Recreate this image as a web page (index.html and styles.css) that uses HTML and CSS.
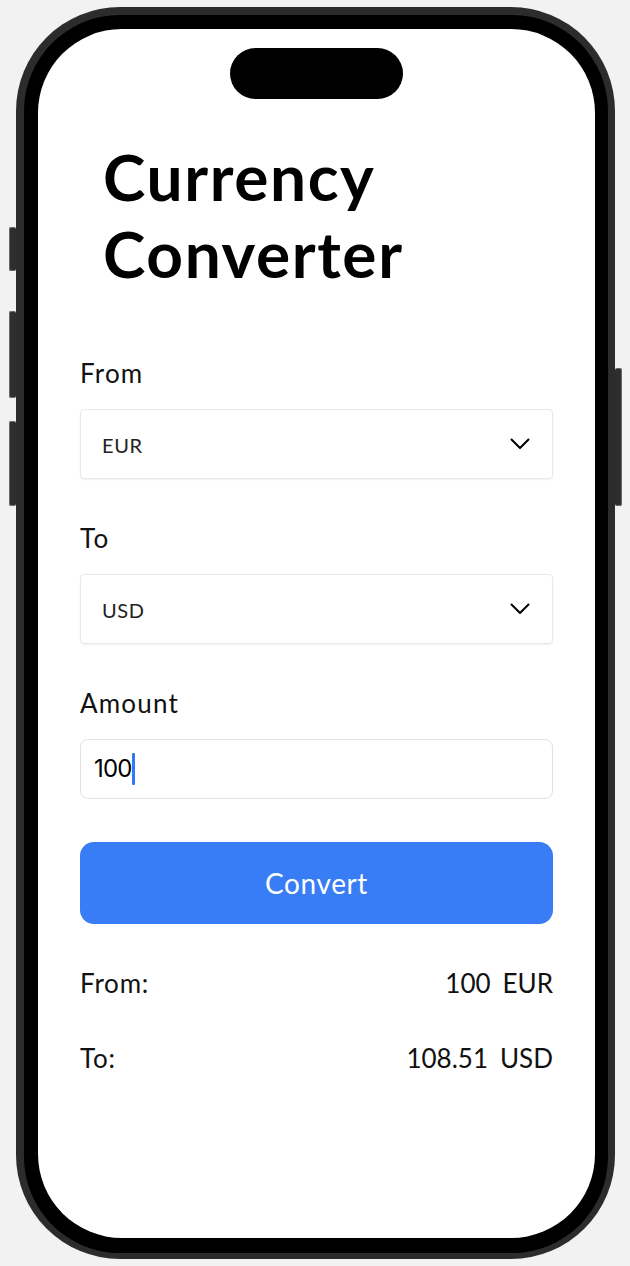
FILE: index.html
```html
<!DOCTYPE html>
<html lang="en">
<head>
<meta charset="utf-8">
<title>Currency Converter</title>
<link rel="stylesheet" href="styles.css">
</head>
<body>
<div class="stage">
  <div class="phone">
    <span class="side-btn btn-action"></span>
    <span class="side-btn btn-vol-up"></span>
    <span class="side-btn btn-vol-down"></span>
    <span class="side-btn btn-power"></span>
    <div class="bezel">
      <div class="screen">
        <div class="island"></div>
        <h1 class="title">Currency Converter</h1>
        <div class="form">
          <div class="field">
            <div class="label">From</div>
            <div class="select">
              <span class="select-value">EUR</span>
              <svg class="chevron" width="20" height="12" viewBox="0 0 20 12"><path d="M1.5 1.5 L10 10 L18.5 1.5" fill="none" stroke="#000" stroke-width="2" stroke-linecap="round" stroke-linejoin="round"/></svg>
            </div>
          </div>
          <div class="field">
            <div class="label">To</div>
            <div class="select">
              <span class="select-value">USD</span>
              <svg class="chevron" width="20" height="12" viewBox="0 0 20 12"><path d="M1.5 1.5 L10 10 L18.5 1.5" fill="none" stroke="#000" stroke-width="2" stroke-linecap="round" stroke-linejoin="round"/></svg>
            </div>
          </div>
          <div class="field">
            <div class="label">Amount</div>
            <div class="input"><span class="input-text">100</span><span class="caret"></span></div>
          </div>
          <button class="convert">Convert</button>
          <div class="result-row">
            <span class="result-key">From:</span>
            <span class="result-val"><span>100</span><span>EUR</span></span>
          </div>
          <div class="result-row">
            <span class="result-key">To:</span>
            <span class="result-val"><span>108.51</span><span>USD</span></span>
          </div>
        </div>
      </div>
    </div>
  </div>
</div>
</body>
</html>
```

FILE: styles.css
```css
* { box-sizing: border-box; }

html, body {
  margin: 0;
  padding: 0;
  background: #f2f2f2;
}

body {
  font-family: "Lato", "Noto Sans", sans-serif;
  color: #111;
}

.stage {
  padding: 7px 0 0 16px;
}

.phone {
  position: relative;
  width: 599px;
  height: 1252px;
  background: #2c2c2c;
  border-radius: 104px;
  padding: 8px 7px 6px 8px;
}

.side-btn {
  position: absolute;
  width: 7px;
  background: #2e2e2e;
  border: 1px solid #6a6a6a;
  border-radius: 2px;
}
.btn-action { left: -7px; top: 220px; height: 44px; border-right: none; }
.btn-vol-up { left: -7px; top: 304px; height: 87px; border-right: none; }
.btn-vol-down { left: -7px; top: 414px; height: 85px; border-right: none; }
.btn-power { right: -7px; top: 361px; height: 138px; border-left: none; }

.bezel {
  width: 100%;
  height: 100%;
  background: #000;
  border-radius: 96px;
  padding: 14px 13px 15px 14px;
}

.screen {
  position: relative;
  width: 100%;
  height: 100%;
  background: #fff;
  border-radius: 84px;
  padding: 109px 42px 0 42px;
  overflow: hidden;
}

.island {
  position: absolute;
  left: 192px;
  top: 19px;
  width: 173px;
  height: 51px;
  background: #000;
  border-radius: 26px;
}

.title {
  margin: 0 0 0 23px;
  font-family: "Lato", sans-serif;
  font-weight: 700;
  font-size: 64px;
  line-height: 77px;
  letter-spacing: 1.6px;
  color: #000;
  max-width: 420px;
}

.form {
  margin-top: 65px;
  display: flex;
  flex-direction: column;
  gap: 43px;
}

.field {
  display: flex;
  flex-direction: column;
  gap: 20px;
}

.label {
  font-size: 26px;
  line-height: 32px;
  letter-spacing: 1.2px;
  color: #111;
}

.select {
  height: 70px;
  border: 1px solid #e8e8e8;
  border-radius: 4px;
  box-shadow: 0 1px 2px rgba(0, 0, 0, 0.06);
  display: flex;
  align-items: center;
  justify-content: space-between;
  padding: 2px 22px 0 21px;
}

.select-value {
  font-size: 20px;
  line-height: 24px;
  letter-spacing: 0.6px;
  color: #222;
}

.chevron {
  display: block;
  margin-top: -2px;
}

.input {
  height: 60px;
  border: 1px solid #e2e2e2;
  border-radius: 8px;
  display: flex;
  align-items: center;
  padding: 0 13px;
}

.input-text {
  font-family: "Inter", "Noto Sans", sans-serif;
  font-size: 24px;
  line-height: 30px;
  color: #000;
  letter-spacing: -0.8px;
}

.caret {
  width: 3px;
  height: 32px;
  background: #3478f6;
  margin-left: 0;
  border-radius: 1px;
}

.convert {
  height: 82px;
  border: none;
  border-radius: 14px;
  background: #387cf6;
  color: #fff;
  font-family: "Lato", sans-serif;
  font-size: 28px;
  letter-spacing: 0.6px;
  padding: 0;
  margin: 0;
}

.result-row {
  display: flex;
  justify-content: space-between;
  font-size: 26px;
  line-height: 32px;
  color: #111;
}

.result-key {
  letter-spacing: 0.8px;
}

.result-val {
  display: flex;
  gap: 12px;
  letter-spacing: 0;
}
```
